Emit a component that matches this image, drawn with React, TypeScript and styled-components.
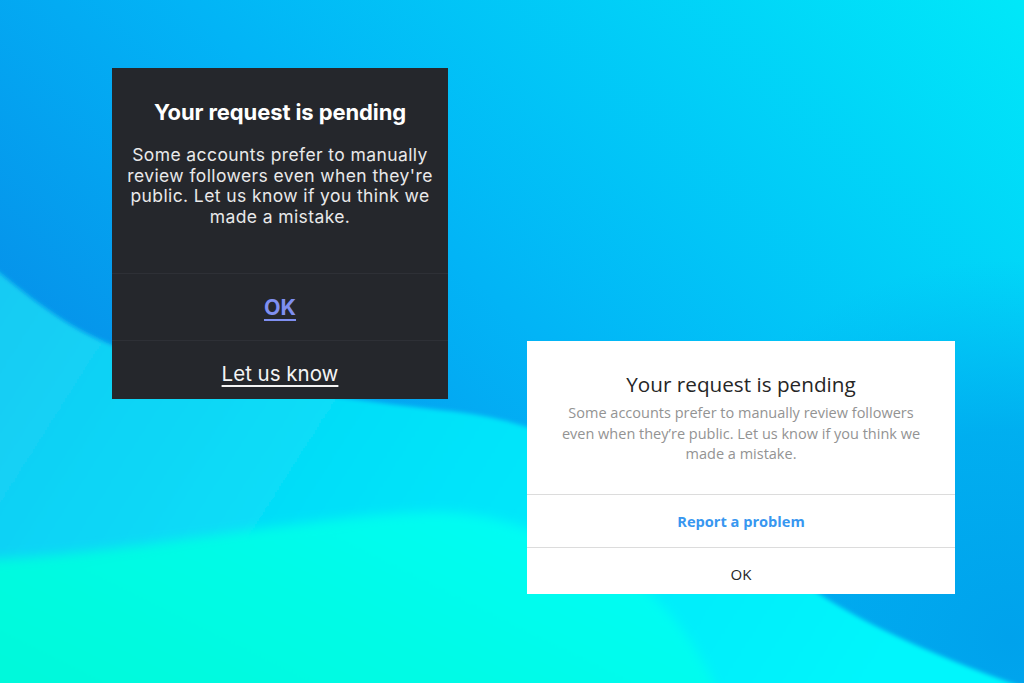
import React from "react";
import styled, { createGlobalStyle } from "styled-components";

const Global = createGlobalStyle`
  html, body { margin: 0; padding: 0; }
  body { width: 1024px; height: 683px; overflow: hidden; }
  * { box-sizing: border-box; }
`;

const Desktop = styled.div`
  position: relative;
  width: 1024px;
  height: 683px;
  overflow: hidden;
`;

const Wallpaper = styled.svg`
  position: absolute;
  inset: 0;
  width: 100%;
  height: 100%;
  display: block;
`;

const DarkDialog = styled.section`
  position: absolute;
  left: 112px;
  top: 68px;
  width: 336px;
  height: 331px;
  overflow: hidden;
  background: #25272c;
  display: flex;
  flex-direction: column;
  font-family: Inter, "Noto Sans", sans-serif;
  color: #f1f1f1;
`;

const DarkBody = styled.div`
  flex: 0 0 205px;
  padding: 31px 6px 0;
  display: flex;
  flex-direction: column;
  align-items: center;
  text-align: center;
`;

const DarkTitle = styled.h2`
  margin: 0 0 20px;
  font-size: 22px;
  line-height: 26px;
  font-weight: 700;
  color: #ffffff;
  letter-spacing: -0.1px;
`;

const DarkText = styled.p`
  margin: 0;
  font-size: 17.5px;
  line-height: 20.6px;
  font-weight: 400;
  letter-spacing: 0.4px;
  color: #e9e9ea;
`;

const DarkAction = styled.div<{ $accent?: boolean }>`
  flex: 0 0 67px;
  border-top: 1px solid #2e3036;
  display: flex;
  align-items: center;
  justify-content: center;
  font-size: ${(p) => (p.$accent ? "21.5px" : "20.5px")};
  font-weight: ${(p) => (p.$accent ? 700 : 400)};
  color: ${(p) => (p.$accent ? "#7f8ff0" : "#f4f4f4")};
  text-decoration: underline;
  text-decoration-thickness: 2px;
  text-underline-offset: 4px;
  padding-bottom: 1px;
`;

const LightDialog = styled.section`
  position: absolute;
  left: 527px;
  top: 341px;
  width: 428px;
  height: 253px;
  overflow: hidden;
  background: #ffffff;
  display: flex;
  flex-direction: column;
  font-family: "Open Sans", "Noto Sans", sans-serif;
`;

const LightBody = styled.div`
  flex: 0 0 153px;
  padding: 30px 29px 0;
  display: flex;
  flex-direction: column;
  align-items: center;
  text-align: center;
`;

const LightTitle = styled.h2`
  margin: 0 0 6px;
  font-size: 20.7px;
  line-height: 26px;
  font-weight: 400;
  color: #262626;
`;

const LightText = styled.p`
  margin: 0;
  font-size: 14.5px;
  line-height: 20.5px;
  font-weight: 400;
  color: #939393;
`;

const LightAction = styled.div<{ $accent?: boolean }>`
  flex: 0 0 53px;
  border-top: 1px solid #dcdcdc;
  display: flex;
  align-items: center;
  justify-content: center;
  font-size: ${(p) => (p.$accent ? "14.6px" : "15px")};
  font-weight: ${(p) => (p.$accent ? 700 : 400)};
  color: ${(p) => (p.$accent ? "#3897f0" : "#262626")};
`;

function Background() {
  return (
    <Wallpaper viewBox="0 0 1024 683" preserveAspectRatio="none">
      <defs>
        <linearGradient id="base" x1="0" y1="0.7" x2="1" y2="0">
          <stop offset="0" stopColor="#0786e6" />
          <stop offset="0.45" stopColor="#02b4f6" />
          <stop offset="1" stopColor="#00e8f9" />
        </linearGradient>
        <radialGradient id="rightblue" cx="1010" cy="640" r="380" gradientUnits="userSpaceOnUse">
          <stop offset="0" stopColor="#00a2ec" stopOpacity="1" />
          <stop offset="0.55" stopColor="#00a8ee" stopOpacity="0.8" />
          <stop offset="1" stopColor="#00b4f2" stopOpacity="0" />
        </radialGradient>
        <linearGradient id="mid" x1="0" y1="0" x2="1" y2="0.3">
          <stop offset="0" stopColor="#1ac8f2" />
          <stop offset="0.45" stopColor="#04e0f9" />
          <stop offset="1" stopColor="#00f6fc" />
        </linearGradient>
        <linearGradient id="low" x1="0" y1="1" x2="1" y2="0.4">
          <stop offset="0" stopColor="#00f8d6" />
          <stop offset="0.6" stopColor="#00fbe6" />
          <stop offset="1" stopColor="#00fdf6" />
        </linearGradient>
        <filter id="soft" x="-10%" y="-10%" width="120%" height="120%">
          <feGaussianBlur stdDeviation="2" />
        </filter>
        <filter id="softer" x="-10%" y="-10%" width="120%" height="120%">
          <feGaussianBlur stdDeviation="6" />
        </filter>
      </defs>
      <rect width="1024" height="683" fill="url(#base)" />
      <rect width="1024" height="683" fill="url(#rightblue)" />
      <path
        d="M -40 240 C 20 290, 60 325, 112 345 C 200 378, 330 398, 440 410 C 480 414, 505 420, 527 427 C 640 462, 740 540, 813 590 C 860 622, 940 660, 1060 700 L 1060 760 L -40 760 Z"
        fill="url(#mid)"
        filter="url(#soft)"
      />
      <path
        d="M -40 560 C 100 560, 300 515, 430 512 C 490 511, 540 530, 600 560 C 660 590, 700 640, 730 720 L -40 740 Z"
        fill="url(#low)"
        filter="url(#softer)"
      />
    </Wallpaper>
  );
}

export default function App() {
  return (
    <Desktop>
      <Global />
      <Background />
      <DarkDialog>
        <DarkBody>
          <DarkTitle>Your request is pending</DarkTitle>
          <DarkText>
            Some accounts prefer to manually review followers even when they're
            public. Let us know if you think we made a mistake.
          </DarkText>
        </DarkBody>
        <DarkAction $accent>OK</DarkAction>
        <DarkAction>Let us know</DarkAction>
      </DarkDialog>
      <LightDialog>
        <LightBody>
          <LightTitle>Your request is pending</LightTitle>
          <LightText>
            Some accounts prefer to manually review followers even when they’re
            public. Let us know if you think we made a mistake.
          </LightText>
        </LightBody>
        <LightAction $accent>Report a problem</LightAction>
        <LightAction>OK</LightAction>
      </LightDialog>
    </Desktop>
  );
}
